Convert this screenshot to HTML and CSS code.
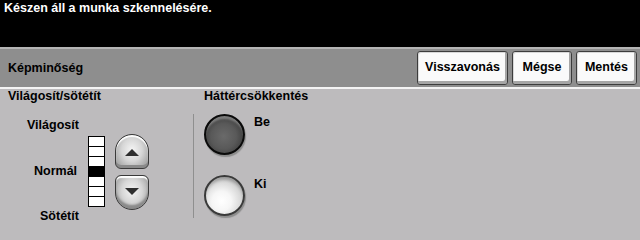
FILE: index.html
```html
<!DOCTYPE html>
<html lang="hu">
<head>
<meta charset="utf-8">
<title>Képminőség</title>
<link rel="stylesheet" href="styles.css">
</head>
<body>
<div class="screen">
  <div class="status">Készen áll a munka szkennelésére.</div>
  <div class="header">
    <div class="header-title">Képminőség</div>
    <div class="actions">
      <button class="btn btn-undo">Visszavonás</button>
      <button class="btn btn-cancel">Mégse</button>
      <button class="btn btn-save">Mentés</button>
    </div>
  </div>
  <div class="content">
    <div class="panel-left">
      <div class="section-title">Világosít/sötétít</div>
      <div class="lighten-row">
        <div class="labels">
          <div class="lbl lbl-light">Világosít</div>
          <div class="lbl lbl-normal">Normál</div>
          <div class="lbl lbl-dark">Sötétít</div>
        </div>
        <div class="scale">
          <div class="cell"></div>
          <div class="cell"></div>
          <div class="cell"></div>
          <div class="cell cell-on"></div>
          <div class="cell"></div>
          <div class="cell"></div>
          <div class="cell"></div>
        </div>
        <div class="arrows">
          <div class="arrow-btn arrow-up"><span class="tri tri-up"></span></div>
          <div class="arrow-btn arrow-down"><span class="tri tri-down"></span></div>
        </div>
      </div>
    </div>
    <div class="panel-right">
      <div class="section-title right-title">Háttércsökkentés</div>
      <div class="options">
        <div class="option opt-be">
          <div class="radio radio-on"></div>
          <div class="opt-label">Be</div>
        </div>
        <div class="option opt-ki">
          <div class="radio radio-off"></div>
          <div class="opt-label">Ki</div>
        </div>
      </div>
    </div>
  </div>
</div>
</body>
</html>
```

FILE: styles.css
```css
* { box-sizing: border-box; }
html, body { margin: 0; padding: 0; }
body {
  width: 640px;
  height: 240px;
  overflow: hidden;
  font-family: "Liberation Sans", Arial, sans-serif;
  font-weight: bold;
  font-size: 12.5px;
  line-height: 14px;
  color: #000;
  background: #bdbbbd;
}
.screen { width: 640px; height: 240px; display: flex; flex-direction: column; }
.status {
  height: 47px;
  background: #000;
  color: #fff;
  padding: 1px 4px 0;
}
.header {
  height: 42px;
  background: #8e8e8e;
  border-top: 2px solid #b4b4b4;
  border-bottom: 2px solid #f4f4f4;
  display: flex;
  align-items: center;
  justify-content: space-between;
  padding: 0 3px 0 8px;
}
.actions { display: flex; gap: 4px; }
.btn {
  height: 34px;
  font: inherit;
  color: #000;
  background: #fafafa;
  border: 1px solid #3c3c3c;
  border-radius: 3px;
  box-shadow: inset -2px -3px 0 #a6a6a6, inset 1px 1px 0 #d8d8d8;
  padding: 0 0 2px;
  cursor: pointer;
}
.btn-undo { width: 91px; }
.btn-cancel { width: 60px; }
.btn-save { width: 61px; }
.content { flex: 1; display: flex; }
.panel-left { width: 193px; }
.section-title { padding-left: 8px; height: 14px; }
.right-title { padding-left: 11px; }
.lighten-row { display: flex; }
.labels { width: 88px; display: flex; flex-direction: column; }
.lbl { height: 14px; }
.lbl-light { margin-top: 15px; margin-left: 27px; }
.lbl-normal { margin-top: 32px; margin-left: 34px; }
.lbl-dark { margin-top: 31px; margin-left: 40px; }
.scale {
  margin-top: 33px;
  width: 17px;
  height: 71px;
  border: 1px solid #000;
  background: #000;
  display: flex;
  flex-direction: column;
  gap: 1px;
}
.cell { flex: 1; background: #fff; }
.cell-on { background: #000; }
.arrows {
  margin-left: 10px;
  margin-top: 31px;
  display: flex;
  flex-direction: column;
  gap: 6px;
}
.arrow-btn {
  width: 34px;
  height: 35px;
  border: 1px solid #3a3a3a;
  background: radial-gradient(ellipse at 50% 45%, #f4f4f4 0%, #d6d6d6 45%, #a9a9a9 80%, #8a8a8a 100%);
  display: flex;
  align-items: center;
  justify-content: center;
}
.arrow-up {
  border-radius: 17px 17px 6px 6px / 17px 17px 6px 6px;
  box-shadow: inset 0 -3px 0 #8a8a8a, inset 0 2px 1px #fff;
}
.arrow-down {
  border-radius: 6px 6px 17px 17px / 6px 6px 17px 17px;
  box-shadow: inset 0 -4px 2px #8a8a8a, inset 0 2px 1px #fff;
}
.tri { width: 0; height: 0; border-left: 7px solid transparent; border-right: 7px solid transparent; }
.tri-up { border-bottom: 7px solid #2e2e2e; margin-top: 2px; }
.tri-down { border-top: 7px solid #2e2e2e; margin-bottom: 2px; }
.panel-right { flex: 1; }
.options {
  margin-top: 11px;
  height: 104px;
  border-left: 1px solid #8f8f8f;
  padding-left: 10px;
  display: flex;
  flex-direction: column;
}
.option { display: flex; gap: 9px; }
.opt-be { margin-top: 0; }
.opt-ki { margin-top: 20px; }
.opt-label { margin-top: 1px; }
.opt-ki .opt-label { margin-top: 2px; }
.radio {
  width: 41px;
  height: 41px;
  border-radius: 50%;
}
.radio-on {
  border: 2px solid #0a0a0a;
  background: radial-gradient(circle at 48% 55%, #6a6a6a 0%, #595959 45%, #3e3e3e 75%, #1c1c1c 100%);
  box-shadow: inset 0 4px 2px -1px rgba(255,255,255,0.3), 1px 2px 1px #8c8c8c;
}
.radio-off {
  border: 2px solid #3a3a3a;
  background: radial-gradient(circle at 42% 65%, #ffffff 0%, #f6f6f6 30%, #d8d8d8 60%, #a8a8a8 90%, #888 100%);
  box-shadow: inset 0 4px 3px -1px rgba(0,0,0,0.2), 1px 2px 1px #8c8c8c;
}
```
